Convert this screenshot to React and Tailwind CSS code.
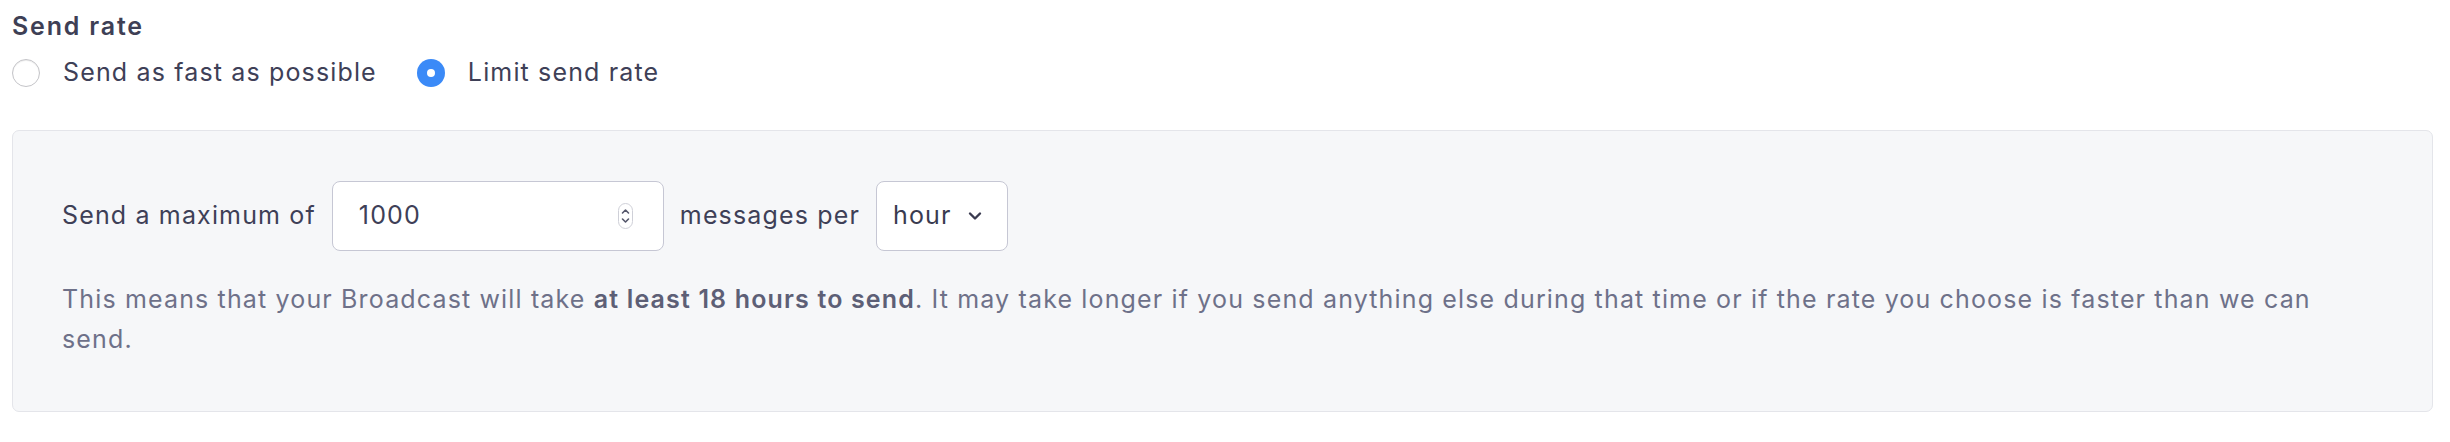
import React from 'react';

const Radio = ({ checked, label }) => (
  <label className="flex items-center gap-[23px]">
    {checked ? (
      <span className="flex h-[28px] w-[28px] items-center justify-center rounded-full bg-[#3b8af7]">
        <span className="h-[8px] w-[8px] rounded-full bg-white" />
      </span>
    ) : (
      <span className="h-[28px] w-[28px] rounded-full border-[1.5px] border-[#c4c4c8] bg-white shadow-[inset_0_1px_1px_rgba(0,0,0,0.08)]" />
    )}
    <span>{label}</span>
  </label>
);

const App = () => {
  return (
    <div
      className="min-h-screen bg-white pl-[12px] pr-[17px] pt-[9px] text-[25px] tracking-[1.15px] text-[#3e4057]"
      style={{ fontFamily: 'Inter, "Noto Sans", sans-serif' }}
    >
      <h3 className="text-[25px] font-semibold leading-[35px] tracking-[1.8px] text-[#3e3f55]">Send rate</h3>

      <div className="mt-[11px] flex h-[35px] items-center gap-[40px] leading-[35px]">
        <Radio label="Send as fast as possible" />
        <Radio checked label="Limit send rate" />
      </div>

      <div className="mt-[40px] rounded-[7px] border-[1.5px] border-[#e4e5ea] bg-[#f6f7f9] pb-[52px] pl-[49px] pr-[80px] pt-[50px]">
        <div className="flex items-center gap-[16px]">
          <span>Send a maximum of</span>
          <div className="flex h-[70px] w-[332px] items-center justify-between rounded-[8px] border-[1.5px] border-[#c6c7d4] bg-white pl-[26px] pr-[30px]">
            <span className="text-[#3e4057]">1000</span>
            <span className="flex h-[26px] w-[15px] flex-col items-center justify-center rounded-full border border-[#cfd0d8] bg-white">
              <svg width="9" height="18" viewBox="0 0 9 18" fill="none" stroke="#55576b" strokeWidth="1.6" strokeLinecap="round" strokeLinejoin="round">
                <path d="M1.5 6 L4.5 3 L7.5 6" />
                <path d="M1.5 12 L4.5 15 L7.5 12" />
              </svg>
            </span>
          </div>
          <span>messages per</span>
          <div className="flex h-[70px] items-center gap-[15px] rounded-[8px] border-[1.5px] border-[#c6c7d4] bg-white pl-[16px] pr-[24px]">
            <span className="text-[#3a3b50]">hour</span>
            <svg width="16" height="10" viewBox="0 0 16 10" fill="none" stroke="#3a3b50" strokeWidth="2.4" strokeLinecap="round" strokeLinejoin="round">
              <path d="M3 2.5 L8 7.5 L13 2.5" />
            </svg>
          </div>
        </div>

        <p className="mt-[28px] leading-[40px] text-[#6e7189]">
          This means that your Broadcast will take{' '}
          <strong className="font-semibold text-[#5d5f76]">at least 18 hours to send</strong>. It may take longer if you
          send anything else during that time or if the rate you choose is faster than we can send.
        </p>
      </div>
    </div>
  );
};

export default App;
